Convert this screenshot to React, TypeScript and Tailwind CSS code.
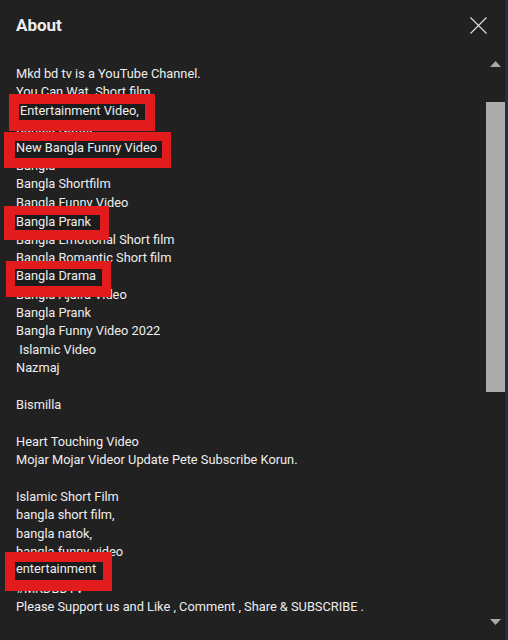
import type { JSX } from "react";

const LINES: string[] = [
  "Mkd bd tv is a YouTube Channel.",
  "You Can Wat. Short film",
  "Entertainment Video,",
  "Bangla Natok",
  "New Bangla Funny Video",
  "Bangla",
  "Bangla Shortfilm",
  "Bangla Funny Video",
  "Bangla Prank",
  "Bangla Emotional Short film",
  "Bangla Romantic Short film",
  "Bangla Drama",
  "Bangla Ajaira Video",
  "Bangla Prank",
  "Bangla Funny Video 2022",
  "\u00a0Islamic Video",
  "Nazmaj",
  "",
  "Bismilla",
  "",
  "Heart Touching Video",
  "Mojar Mojar Videor Update Pete Subscribe Korun.",
  "",
  "Islamic Short Film",
  "bangla short film,",
  "bangla natok,",
  "bangla funny video",
  "entertainment",
  "#MKDBDTV",
  "Please Support us and Like , Comment , Share & SUBSCRIBE .",
  "",
];

type Mark = {
  text: string;
  box: string;
};

// red annotation boxes drawn over the description
const MARKS: Mark[] = [
  { text: "Entertainment Video,", box: "left-[9px] top-[94px] w-[146px] h-[37px] pl-[10px] pr-[10px] pt-[11px] pb-[10px]" },
  { text: "New Bangla Funny Video", box: "left-[4px] top-[132px] w-[167px] h-[36px] pl-[11px] pr-[9px] pt-[10px] pb-[9px]" },
  { text: "Bangla Prank", box: "left-[4px] top-[206px] w-[105px] h-[34px] pl-[11px] pr-[9px] pt-[10px] pb-[9px]" },
  { text: "Bangla Drama", box: "left-[6px] top-[261px] w-[105px] h-[36px] pl-[9px] pr-[9px] pt-[9px] pb-[10px]" },
  { text: "entertainment", box: "left-[5px] top-[552px] w-[107px] h-[39px] pl-[10px] pr-[9px] pt-[11px] pb-[10px]" },
];

function CloseIcon(): JSX.Element {
  return (
    <svg width="17" height="17" viewBox="0 0 17 17" className="block">
      <path d="M0.5 0.5 L16.5 16.5 M16.5 0.5 L0.5 16.5" stroke="#e0e0e0" strokeWidth="1.1" fill="none" />
    </svg>
  );
}

function Scrollbar(): JSX.Element {
  return (
    <div className="flex w-[19px] flex-col pt-[5px] pb-[10px]">
      <div className="flex h-[17px] items-center justify-center">
        <svg width="11" height="6" viewBox="0 0 11 6">
          <path d="M5.5 0 L11 6 L0 6 Z" fill="#a8a8a8" />
        </svg>
      </div>
      <div className="flex-1 pt-[30px]">
        <div className="h-[290px] w-[19px] bg-[#acacac]" />
      </div>
      <div className="flex h-[17px] items-center justify-center">
        <svg width="11" height="6" viewBox="0 0 11 6">
          <path d="M0 0 L11 0 L5.5 6 Z" fill="#a8a8a8" />
        </svg>
      </div>
    </div>
  );
}

export default function App(): JSX.Element {
  return (
    <div
      className="relative flex h-[640px] w-[508px] overflow-hidden bg-[#212121] text-[#eeeeee]"
      style={{ fontFamily: "Roboto, 'Liberation Sans', sans-serif" }}
    >
      <div className="flex w-[505px] flex-col">
        <div className="flex h-[50px] items-center justify-between pl-4 pr-[18px] pt-[1px]">
          <h2 className="text-[17px] font-bold leading-none">About</h2>
          <CloseIcon />
        </div>
        <div className="flex min-h-0 flex-1">
          <div className="flex-1 overflow-hidden pl-4 pt-[15px] text-[12.8px] leading-[18.4px]">
            {LINES.map((line, index) => (
              <div key={index} className="h-[18.4px] whitespace-pre">
                {line}
              </div>
            ))}
          </div>
          <Scrollbar />
        </div>
      </div>
      <div className="w-[3px] bg-[#2c2c38]" />

      {MARKS.map((mark) => (
        <div key={mark.text + mark.box} className={`absolute bg-[#e21c1c] ${mark.box}`}>
          <div className="h-full bg-[#1c1c1c] pl-[1px] text-[12.8px] leading-[13px]">
            <div className="-mt-[1px]">{mark.text}</div>
          </div>
        </div>
      ))}
    </div>
  );
}
